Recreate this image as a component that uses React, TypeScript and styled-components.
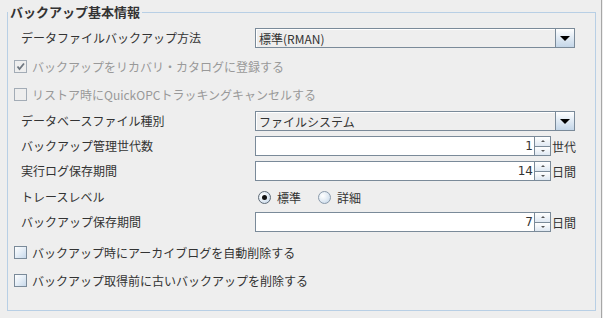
import React from "react";
import styled, { createGlobalStyle } from "styled-components";

const GlobalStyle = createGlobalStyle`
  html, body {
    margin: 0;
    padding: 0;
    background: #eeeeee;
  }
  body {
    font-family: "Noto Sans CJK JP", "DejaVu Sans", sans-serif;
    font-size: 12px;
    color: #333333;
  }
`;

const Frame = styled.div`
  box-sizing: border-box;
  width: 602px;
  height: 318px;
  padding: 4px 5px 7px 7px;
  border-right: 1px solid #a6a6a6;
  display: flex;
  flex-direction: column;
`;

const Group = styled.fieldset`
  flex: 1;
  margin: 0;
  padding: 0;
  min-width: 0;
  border: 1px solid #b8cfe5;
`;

const Title = styled.legend`
  padding: 0 2px;
  margin-left: 0;
  font-size: 13px;
  line-height: 16px;
  font-weight: bold;
  color: #333333;
`;

const Body = styled.div`
  padding: 8px 0 0 6px;
  display: flex;
  flex-direction: column;
`;

const Row = styled.div<{ $mt?: number }>`
  display: flex;
  align-items: center;
  height: 20px;
  margin-top: ${(p) => p.$mt ?? 0}px;
`;

const Label = styled.div`
  box-sizing: border-box;
  width: 241px;
  padding-left: 7px;
  line-height: 20px;
  white-space: nowrap;
`;

/* combo box */
const Combo = styled.div`
  box-sizing: border-box;
  width: 320px;
  height: 20px;
  display: flex;
  border: 1px solid #7a8a99;
  background: #eeeeee;
`;

const ComboText = styled.div`
  flex: 1;
  padding-left: 2px;
  line-height: 18px;
  border: 1px solid #ffffff;
  border-right: none;
  border-bottom: none;
`;

const ComboButton = styled.div`
  width: 18px;
  border-left: 1px solid #7a8a99;
  background: linear-gradient(180deg, #ffffff 0%, #e3ecf5 45%, #c4d6e8 100%);
  display: flex;
  align-items: center;
  justify-content: center;
`;

const DownArrow = styled.span`
  width: 0;
  height: 0;
  border-left: 5px solid transparent;
  border-right: 5px solid transparent;
  border-top: 5px solid #000000;
`;

/* spinner */
const SpinField = styled.div`
  box-sizing: border-box;
  width: 280px;
  height: 20px;
  border: 1px solid #7a8a99;
  background: #ffffff;
  text-align: right;
  padding-right: 1px;
  line-height: 18px;
  font-family: "DejaVu Sans", sans-serif;
  font-size: 12px;
`;

const SpinButtons = styled.div`
  width: 16px;
  height: 20px;
  display: flex;
  flex-direction: column;
`;

const SpinButton = styled.div<{ $up?: boolean }>`
  box-sizing: border-box;
  flex: 1;
  border: 1px solid #7a8a99;
  border-left: none;
  border-top: ${(p) => (p.$up ? "1px solid #7a8a99" : "none")};
  background: linear-gradient(180deg, #ffffff 0%, #dfe8f2 100%);
  display: flex;
  align-items: center;
  justify-content: center;
`;

const TinyArrow = styled.span<{ $up?: boolean }>`
  width: 0;
  height: 0;
  border-left: 2px solid transparent;
  border-right: 2px solid transparent;
  ${(p) =>
    p.$up ? "border-bottom: 2px solid #555;" : "border-top: 2px solid #555;"}
`;

const Unit = styled.span`
  padding-left: 1px;
  white-space: nowrap;
`;

/* check box */
const CheckLine = styled.label<{ $disabled?: boolean }>`
  display: flex;
  align-items: center;
  gap: 5px;
  color: ${(p) => (p.$disabled ? "#999999" : "#333333")};
  white-space: nowrap;
`;

const Box = styled.span<{ $disabled?: boolean }>`
  box-sizing: border-box;
  width: 13px;
  height: 13px;
  display: flex;
  align-items: center;
  justify-content: center;
  border: 1px solid ${(p) => (p.$disabled ? "#a3acb6" : "#7a8a99")};
  background: ${(p) =>
    p.$disabled
      ? "#eeeeee"
      : "linear-gradient(135deg, #ffffff 0%, #e4edf6 50%, #c7d8ea 100%)"};
`;

/* radio */
const RadioGroup = styled.div`
  display: flex;
  align-items: center;
`;

const RadioLine = styled.label`
  display: flex;
  align-items: center;
  gap: 6px;
  margin-left: 3px;
  margin-right: 14px;
`;

const RadioDot = styled.span<{ $on?: boolean }>`
  box-sizing: border-box;
  width: 13px;
  height: 13px;
  border-radius: 50%;
  border: 1px solid ${(p) => (p.$on ? "#5f6b77" : "#8a9aab")};
  background: radial-gradient(circle at 35% 35%, #ffffff 0%, #e2ebf4 50%, #bfd2e6 100%);
  display: flex;
  align-items: center;
  justify-content: center;
  &::after {
    content: "";
    width: 5px;
    height: 5px;
    border-radius: 50%;
    background: ${(p) => (p.$on ? "#111111" : "transparent")};
  }
`;

const Check = ({ checked, disabled, text }: { checked?: boolean; disabled?: boolean; text: string }) => (
  <CheckLine $disabled={disabled}>
    <Box $disabled={disabled}>
      {checked && (
        <svg width="9" height="9" viewBox="0 0 9 9">
          <path d="M1.5 4.5 L3.5 7 L8 1.5" fill="none" stroke="#6f7780" strokeWidth="1.8" />
        </svg>
      )}
    </Box>
    {text}
  </CheckLine>
);

const Spinner = ({ value, unit }: { value: string; unit: string }) => (
  <>
    <SpinField>{value}</SpinField>
    <SpinButtons>
      <SpinButton $up>
        <TinyArrow $up />
      </SpinButton>
      <SpinButton>
        <TinyArrow />
      </SpinButton>
    </SpinButtons>
    <Unit>{unit}</Unit>
  </>
);

const ComboBox = ({ value }: { value: string }) => (
  <Combo>
    <ComboText>{value}</ComboText>
    <ComboButton>
      <DownArrow />
    </ComboButton>
  </Combo>
);

export default function App() {
  return (
    <>
      <GlobalStyle />
      <Frame>
        <Group>
          <Title>バックアップ基本情報</Title>
          <Body>
            <Row>
              <Label>データファイルバックアップ方法</Label>
              <ComboBox value="標準(RMAN)" />
            </Row>
            <Row $mt={8}>
              <Check checked disabled text="バックアップをリカバリ・カタログに登録する" />
            </Row>
            <Row $mt={8}>
              <Check disabled text="リストア時にQuickOPCトラッキングキャンセルする" />
            </Row>
            <Row $mt={7}>
              <Label>データベースファイル種別</Label>
              <ComboBox value="ファイルシステム" />
            </Row>
            <Row $mt={5}>
              <Label>バックアップ管理世代数</Label>
              <Spinner value="1" unit="世代" />
            </Row>
            <Row $mt={5}>
              <Label>実行ログ保存期間</Label>
              <Spinner value="14" unit="日間" />
            </Row>
            <Row $mt={6}>
              <Label>トレースレベル</Label>
              <RadioGroup>
                <RadioLine>
                  <RadioDot $on />
                  標準
                </RadioLine>
                <RadioLine>
                  <RadioDot />
                  詳細
                </RadioLine>
              </RadioGroup>
            </Row>
            <Row $mt={5}>
              <Label>バックアップ保存期間</Label>
              <Spinner value="7" unit="日間" />
            </Row>
            <Row $mt={10}>
              <Check text="バックアップ時にアーカイブログを自動削除する" />
            </Row>
            <Row $mt={8}>
              <Check text="バックアップ取得前に古いバックアップを削除する" />
            </Row>
          </Body>
        </Group>
      </Frame>
    </>
  );
}
